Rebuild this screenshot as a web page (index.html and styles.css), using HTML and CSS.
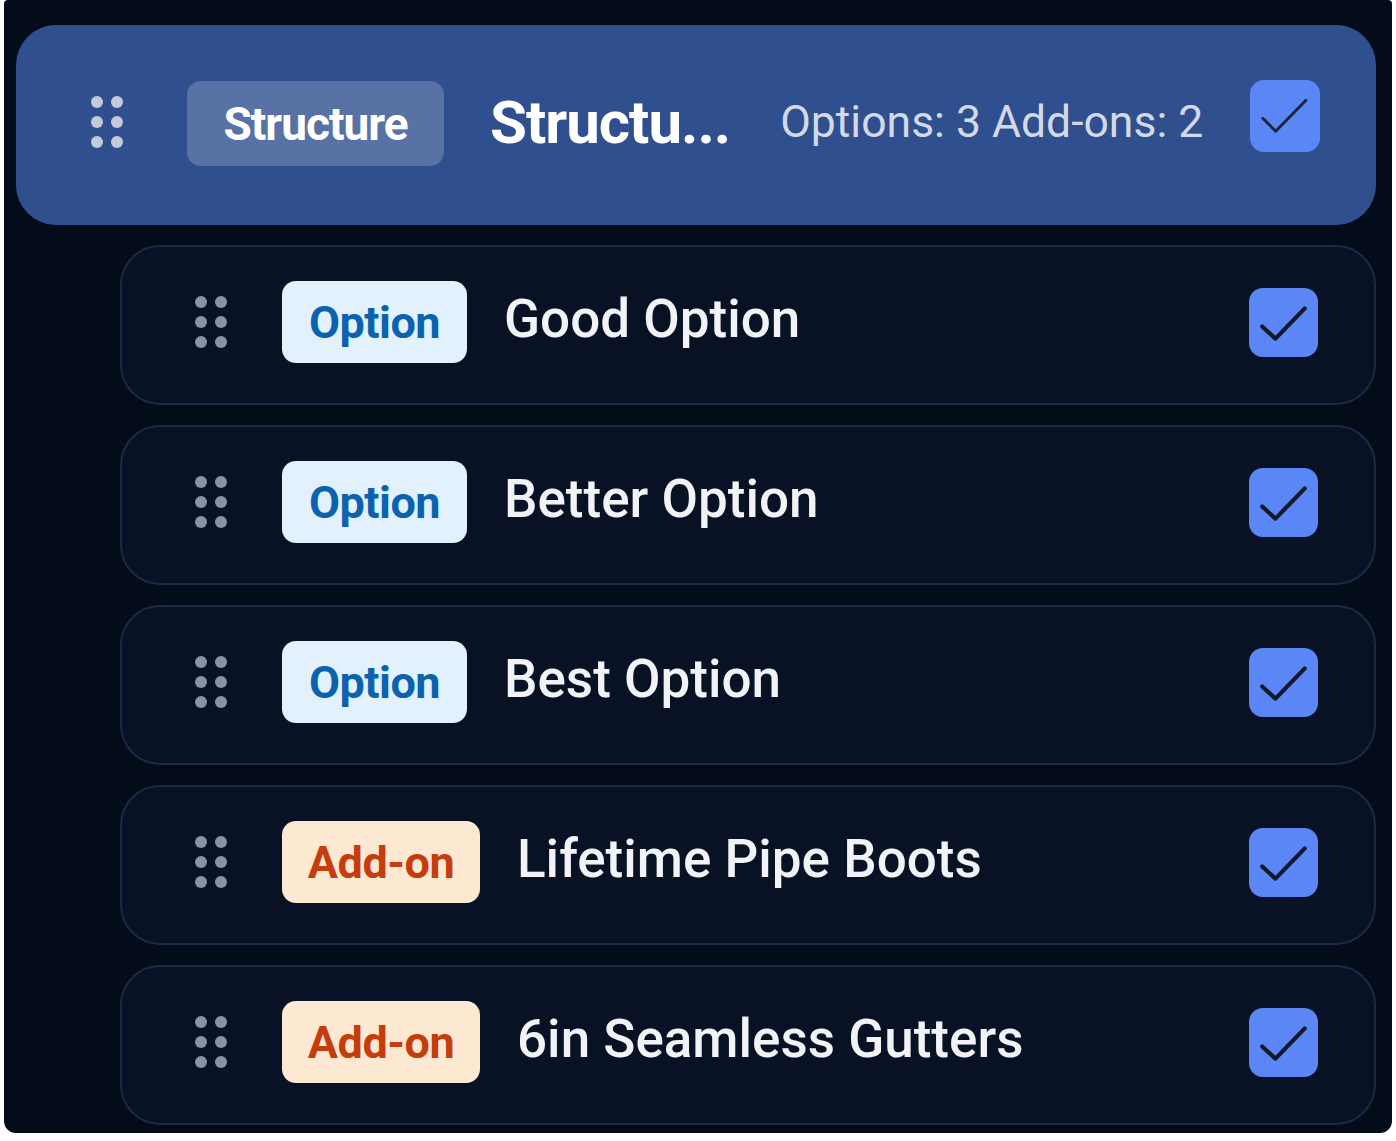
FILE: index.html
```html
<!DOCTYPE html>
<html lang="en">
<head>
    <meta charset="UTF-8">
    <meta name="viewport" content="width=device-width, initial-scale=1.0">
    <title>Structure Group</title>
    <link rel="stylesheet" href="styles.css">
</head>
<body>
    <main class="panel">
        <section class="group-head">
            <span class="grip grip-light">
                <i></i><i></i><i></i><i></i><i></i><i></i>
            </span>
            <span class="chip chip-group">Structure</span>
            <h1 class="group-title">Structu...</h1>
            <span class="group-stats">Options: 3 Add-ons: 2</span>
            <span class="check check-head"><svg viewBox="0 0 24 24"><path d="M4.4 12.8l4.4 4.4L19.2 6.6"/></svg></span>
        </section>

        <ul class="items">
            <li class="item">
                <span class="grip"><i></i><i></i><i></i><i></i><i></i><i></i></span>
                <span class="chip chip-option">Option</span>
                <span class="item-name">Good Option</span>
                <span class="check"><svg viewBox="0 0 24 24"><path d="M4.6 13.4l4.6 4.2L19.4 7.1"/></svg></span>
            </li>
            <li class="item">
                <span class="grip"><i></i><i></i><i></i><i></i><i></i><i></i></span>
                <span class="chip chip-option">Option</span>
                <span class="item-name">Better Option</span>
                <span class="check"><svg viewBox="0 0 24 24"><path d="M4.6 13.4l4.6 4.2L19.4 7.1"/></svg></span>
            </li>
            <li class="item">
                <span class="grip"><i></i><i></i><i></i><i></i><i></i><i></i></span>
                <span class="chip chip-option">Option</span>
                <span class="item-name">Best Option</span>
                <span class="check"><svg viewBox="0 0 24 24"><path d="M4.6 13.4l4.6 4.2L19.4 7.1"/></svg></span>
            </li>
            <li class="item">
                <span class="grip"><i></i><i></i><i></i><i></i><i></i><i></i></span>
                <span class="chip chip-addon">Add-on</span>
                <span class="item-name">Lifetime Pipe Boots</span>
                <span class="check"><svg viewBox="0 0 24 24"><path d="M4.6 13.4l4.6 4.2L19.4 7.1"/></svg></span>
            </li>
            <li class="item">
                <span class="grip"><i></i><i></i><i></i><i></i><i></i><i></i></span>
                <span class="chip chip-addon">Add-on</span>
                <span class="item-name">6in Seamless Gutters</span>
                <span class="check"><svg viewBox="0 0 24 24"><path d="M4.6 13.4l4.6 4.2L19.4 7.1"/></svg></span>
            </li>
        </ul>
    </main>
</body>
</html>
```

FILE: styles.css
```css
body {
    margin: 0;
    background: #ffffff;
    font-family: Roboto, "Liberation Sans", sans-serif;
}

.panel {
    margin: 0 4px;
    height: 1133px;
    box-sizing: border-box;
    padding: 25px 16px 0 12px;
    background: #040b19;
    border-radius: 4px 4px 12px 12px;
}

/* group header */
.group-head {
    display: flex;
    align-items: center;
    height: 200px;
    box-sizing: border-box;
    padding: 0 56px 6px 75px;
    background: #2f4f8f;
    border-radius: 40px;
}

.grip {
    display: grid;
    grid-template-columns: 12px 12px;
    gap: 8px;
    flex: none;
}

.grip i {
    width: 12px;
    height: 12px;
    border-radius: 50%;
    background: #8a93a3;
}

.grip-light i {
    background: #c3cad8;
}

.chip {
    flex: none;
    display: inline-flex;
    align-items: center;
    justify-content: center;
    height: 82px;
    box-sizing: border-box;
    border-radius: 14px;
    font-weight: 700;
    font-size: 45px;
    letter-spacing: -0.5px;
}

.chip-group {
    margin-left: 64px;
    width: 257px;
    height: 85px;
    margin-top: 3px;
    background: rgba(255, 255, 255, 0.2);
    color: #ffffff;
    font-size: 46px;
    letter-spacing: -1px;
}

.group-title {
    margin: 0 0 0 46px;
    color: #ffffff;
    font-size: 60px;
    font-weight: 700;
    letter-spacing: -1px;
    white-space: nowrap;
}

.group-stats {
    margin-left: 50px;
    color: #d3d9e6;
    font-size: 44.5px;
    white-space: nowrap;
}

.check {
    flex: none;
    margin-left: auto;
    width: 69px;
    height: 69px;
    border-radius: 14px;
    background: #5a86f6;
    display: flex;
    align-items: center;
    justify-content: center;
}

.check svg {
    width: 100%;
    height: 100%;
    fill: none;
    stroke: #121a2a;
    stroke-width: 1.45;
    stroke-linecap: round;
    stroke-linejoin: round;
}

.check-head {
    width: 70px;
    height: 72px;
    margin-bottom: 12px;
}

.check-head svg {
    stroke: #1d2638;
    stroke-width: 1;
}

/* rows */
.items {
    list-style: none;
    margin: 20px 0 0 104px;
    padding: 0;
    display: flex;
    flex-direction: column;
    gap: 20px;
}

.item {
    display: flex;
    align-items: center;
    height: 160px;
    box-sizing: border-box;
    padding: 0 56px 6px 73px;
    background: #091224;
    border: 2px solid #1a2a46;
    border-radius: 40px;
}

.item .chip {
    margin-left: 55px;
}

.chip-option {
    width: 185px;
    background: #e2f1fc;
    color: #0b63b0;
}

.chip-addon {
    width: 198px;
    background: #fde9d1;
    color: #c53d0c;
}

.item-name {
    margin: 0 0 6px 37px;
    color: #f1f3f6;
    font-size: 53px;
    font-weight: 500;
    white-space: nowrap;
}
```
